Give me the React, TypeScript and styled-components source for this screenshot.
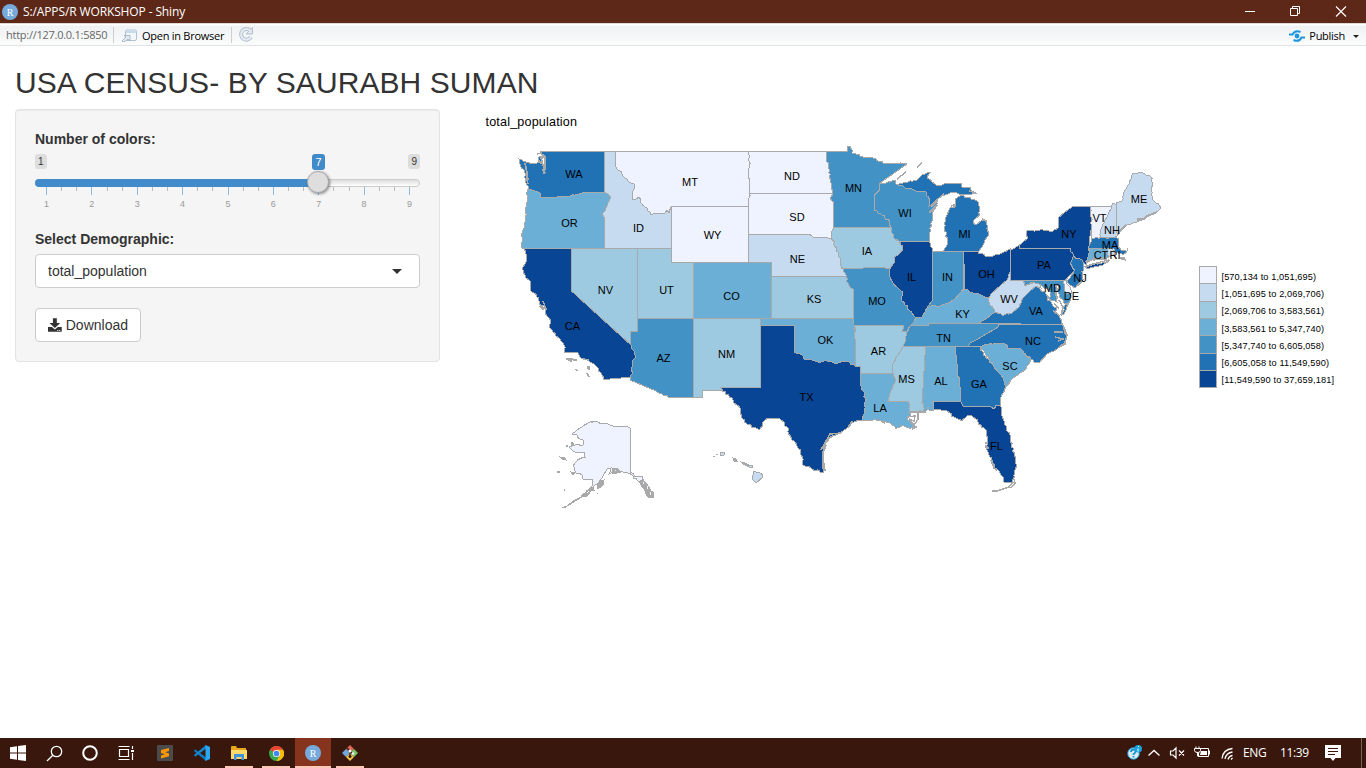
import React from 'react';
import styled, { createGlobalStyle } from 'styled-components';

const GlobalStyle = createGlobalStyle`
  * { box-sizing: border-box; }
  body { margin: 0; background: #fff; color: #333; overflow: hidden;
    font: 14px/20px "Helvetica Neue", "Liberation Sans", Arial, sans-serif; }
`;
const ui = `"Segoe UI", "Open Sans", "Noto Sans", sans-serif`;

const Screen = styled.div`display: flex; flex-direction: column; width: 1366px; height: 768px;`;

const TitleBar = styled.header`
  display: flex; align-items: center; height: 23px; background: #5d2817; padding-left: 2px;
  color: #fff; font: 12px/22px ${ui};
`;
const TitleText = styled.span`flex: 1; margin-left: 5px; letter-spacing: -0.12px;`;
const WindowButtons = styled.div`display: flex; width: 138px; height: 22px; svg { width: 46px; height: 22px; }`;

const ToolBar = styled.nav`
  display: flex; align-items: center; height: 23px; padding: 0 7px 0 6px;
  background: linear-gradient(#fff 0 1px, #eff1f2 2px, #fbfcfc); border-bottom: 1px solid #e1e4e5;
  border-top: 1px solid #e0d8d5; font: 11px/20px ${ui}; color: #000;
`;
const Url = styled.span`width: 107px; color: #666; letter-spacing: -0.26px; white-space: nowrap;`;
const Divider = styled.i`width: 1px; height: 16px; background: #ccd0d3;`;
const OpenButton = styled.span`
  display: flex; align-items: center; gap: 5px; width: 117px; padding: 2px 0 0 7px; white-space: nowrap; letter-spacing: -0.26px;
`;
const Publish = styled.span`
  display: flex; align-items: center; margin-left: auto; padding-top: 3px; gap: 4px; letter-spacing: -0.28px;
`;
const Caret = styled.i<{ $size: number; $color: string; $left?: number }>`
  width: 0; height: 0; border: ${p => p.$size}px solid transparent; border-bottom: 0;
  border-top-color: ${p => p.$color}; margin-left: ${p => p.$left ?? 0}px;
`;

const Page = styled.main`flex: 1; padding: 0 15px; min-height: 0;`;
const Heading = styled.h2`
  margin: 20px 0 10px; font-size: 30px; line-height: 33px; font-weight: 400; white-space: nowrap; letter-spacing: 0.08px;
`;
const Columns = styled.div`display: flex; gap: 30px; align-items: flex-start;`;
const Well = styled.aside`
  width: 425px; height: 253px; padding: 19px; background: #f5f5f5; border: 1px solid #e3e3e3; border-radius: 4px;
  box-shadow: inset 0 1px 1px rgba(0,0,0,.05);
`;
const FieldLabel = styled.label`display: block; font-weight: 700; height: 20px; margin-bottom: 5px;`;
const Slider = styled.div`position: relative; height: 60px; margin-bottom: 15px;`;
const Limits = styled.div`display: flex; justify-content: space-between; height: 25px;`;
const Limit = styled.span`
  height: 15px; padding: 0 3px; border-radius: 3px; background: #dddddd; color: #333;
  font-size: 10px; line-height: 16px;
`;
const ValueBadge = styled.span`
  position: absolute; left: 277px; top: 0; width: 13px; height: 16px; border-radius: 3px; background: #428bca;
  color: #fff; font-size: 11px; line-height: 17px; text-align: center;
`;
const Track = styled.div`
  height: 8px; border: 1px solid #ccc; border-radius: 8px; background: linear-gradient(#dedede, #fff);
`;
const Fill = styled.div`width: 283px; height: 8px; margin: -1px; border-radius: 8px 0 0 8px; background: #428bca;`;
const Handle = styled.span`
  position: absolute; left: 272px; top: 17px; width: 22px; height: 22px; border-radius: 50%;
  background: #dedede; border: 1px solid #ababab; box-shadow: 1px 1px 3px rgba(0,0,0,.45);
`;
const Ticks = styled.div`display: flex; justify-content: space-between; height: 10px; width: 364px; margin-left: 11px;`;
const Tick = styled.i<{ $major: boolean }>`
  width: 1px; height: ${p => (p.$major ? 8 : 4)}px; background: ${p => (p.$major ? '#8fbbdf' : '#bbb')};
`;
const Numbers = styled.div`
  display: flex; justify-content: space-between; width: 368px; margin-left: 9px; color: #999; font-size: 9px; line-height: 14px;
`;
const Select = styled.div`
  display: flex; align-items: center; justify-content: space-between; height: 34px; margin-bottom: 20px;
  padding: 0 17px 0 12px; border: 1px solid #ccc; border-radius: 4px; background: #fff;
`;
const Button = styled.button`
  display: flex; align-items: center; gap: 4px; width: 106px; height: 34px; padding: 0 12px;
  border: 1px solid #ccc; border-radius: 4px; background: #fff; color: #333; font: inherit; white-space: nowrap;
`;
const Plot = styled.svg`
  width: 881px; height: 400px; overflow: visible; flex: none;
  text { font-family: "Liberation Sans", Arial, sans-serif; fill: #000; }
`;

const TaskBar = styled.footer`
  display: flex; height: 30px; background: #3a170c; color: #fff; font: 12px/30px ${ui};
`;
const Task = styled.div<{ $open?: boolean; $active?: boolean }>`
  display: flex; align-items: center; justify-content: center; width: 36px; height: 30px;
  background: ${p => (p.$active ? '#86341d' : 'transparent')};
  background-image: ${p => (p.$open ? 'linear-gradient(#ffc8b6, #ffc8b6)' : 'none')};
  background-size: ${p => (p.$active ? 36 : 28)}px 2px; background-position: center bottom; background-repeat: no-repeat;
`;
const Apps = styled.div`display: flex; gap: 1px; margin-left: 3px;`;
const Tray = styled.div`display: flex; align-items: center; margin-left: auto; height: 30px;`;
const TrayText = styled.span<{ $w: number; $gap: number }>`
  width: ${p => p.$w}px; margin-right: ${p => p.$gap}px; white-space: nowrap; letter-spacing: -0.4px;
`;
const Edge = styled.i`width: 1px; height: 30px; margin: 0 4px 0 20px; background: #7a6259;`;

const C = ['#eff3ff', '#c6dbef', '#9ecae1', '#6baed6', '#4292c6', '#2171b5', '#084594'];

type Shape = [number, string];
const shapes: Shape[] = [
  // west
  [5, '541,151.5 604.5,151.5 604.5,192.5 584,192.5 570,196 560,196 556,197.5 541,198 540,193 534,190.5 528,189.5 526,179 524,170 520,164 519,159 526,162 534,164 540,163 539,157 543,156 542,163 544,174 545,170 545,160 542,155'],
  [3, '528,189.5 534,190.5 540,193 541,198 556,197.5 560,196 570,196 584,192.5 604.5,192.5 608,194 610.5,197 607,206 602.5,215 605,218 604.5,222 604.5,248.5 522.5,248.5 521.5,236 524,226 526,210 527,195'],
  [1, '604.5,151.5 615.5,151.5 615.5,166.5 622,174 627,179 631,183 634,184 634,189 632,193 632,199 636,199 639,197 641,203 645,207 648,211 651,215 655,213 665,213 667,210 669,213 671.5,206.5 671.5,248.5 604.5,248.5 604.5,222 605,218 602.5,215 607,206 610.5,197 608,194 604.5,192.5'],
  [0, '615.5,151.5 748.5,151.5 749.5,162 748.5,172 749.5,180 749.5,206.5 671.5,206.5 669,213 667,210 665,213 655,213 651,215 648,211 645,207 641,203 639,197 636,199 632,199 632,193 634,189 634,184 631,183 627,179 622,174 615.5,166.5'],
  [0, '671.5,206.5 748.5,206.5 748.5,262.5 671.5,262.5'],
  [2, '571.5,248.5 637.5,248.5 637.5,331 630,331 630,341 631,345 571.5,291'],
  [2, '637.5,248.5 671.5,248.5 671.5,262.5 693.5,262.5 693.5,318.5 637.5,318.5'],
  [3, '693.5,262.5 771.5,262.5 771.5,318.5 693.5,318.5'],
  [6, '524,248.5 571.5,248.5 571.5,291 631,345 633,350 636,356 632,362 631,370 633,373 632,377 604,379.5 602,375 598,368 592,363 588,359 583,359 578,353 565,352.5 564,345 561,341 556,336 552,330 549,326 551,321 547,316 545,313 546,307 541,305 537,297 530.5,290 530,281 525,275 522,269 526,262 526,254'],
  [4, '637.5,318.5 693.5,318.5 693.5,397.5 671,397.5 656,391 630,380 630,377 633,373 631,370 632,362 636,356 633,350 631,345 630,341 630,331 637.5,331'],
  [2, '693.5,318.5 760.5,318.5 760.5,387.5 721,387.5 721,390.5 702.5,390.5 702.5,397.5 693.5,397.5'],
  // plains
  [0, '748.5,151.5 826,151.5 826,157 828.5,168 830,182 832.5,193.5 749.5,193.5 749.5,180 748.5,172 749.5,162'],
  [0, '749.5,193.5 832.5,193.5 830.5,198 833.5,202 833.5,227.5 831.5,232 832.5,240 825,237 813,237 810,234.5 748.5,234.5 748.5,206.5'],
  [1, '748.5,234.5 810,234.5 813,237 825,237 832.5,240 836.5,248 840,258 841,266 846.5,276.5 771.5,276.5 771.5,262.5 748.5,262.5'],
  [2, '771.5,276.5 846.5,276.5 848,283 851,288 853.5,289.5 853.5,318.5 771.5,318.5'],
  [3, '760.5,318.5 853.5,318.5 855,330 855.5,366 847,361 834,363 827,361 818,362 811,359 804,359 802,355 794.5,352.5 794.5,325.5 760.5,325.5'],
  [6, '760.5,325.5 794.5,325.5 794.5,352.5 802,355 804,359 811,359 818,362 827,361 834,363 847,361 855.5,366 860.5,366 860.5,385 865.5,398 864.5,410 862.5,420 852,422 850,426 840,433 830,437 826,443 822,454 823.5,465 823.5,473 812,469 803,465 801,450 792,440 787,427 779,418 767,418.5 763,422 762.5,426 759,430 747,424 742,418 740,408 733,400 720.5,387.5 760.5,387.5'],
  [4, '826,151.5 848,151.5 847.5,146 850.5,146 852,153 863,157 873,158 883,163 895,163 907,164 897,171 880,183 879.5,190 874.5,195 874.5,210 882,215 890,222 891.5,227.5 833.5,227.5 833.5,202 830.5,198 832.5,193.5 830,182 828.5,168 826,157'],
  [2, '833.5,227.5 891.5,227.5 893,237 899,241 903,249 898,255 894,257 894,263 889.5,269 885,267.5 843,268.5 841,266 840,258 836.5,248 832.5,240 831.5,232'],
  [4, '843,268.5 885,267.5 889.5,269 889,275 897,287 903,292 902,301 911.5,312 915,317 914,322 909,328 907,332 902,331.5 903.5,325.5 854.5,325.5 853.5,318.5 853.5,289.5 851,288 848,283 846.5,276.5'],
  [2, '854.5,325.5 903.5,325.5 902,331.5 907,332 905,342 903.5,346.5 897,356 892.5,365 893,373.5 861,373.5 860.5,366 855.5,366 855.5,340'],
  [3, '861,373.5 893,373.5 895,382 890,393 888,401.5 908,401.5 910,411 911,416 907,418 915,425 910,429 903,425 900,427 896,428.5 890,423 884,421 873,420 862.5,420 864.5,410 865.5,398 860.5,385'],
  [2, '903.5,346.5 925.5,346.5 922.5,397 923.5,411.5 918,412 910,411 908,401.5 888,401.5 890,393 895,382 893,373.5 892.5,365 897,356'],
  [3, '925.5,346.5 955,346.5 958,373 960.5,388 960.5,401.5 932.5,401.5 933.5,410 929,410 928,407 926.5,411 923.5,411.5 922.5,397'],
  // great lakes
  [4, '879.5,183 886,183 895,180 896,184 905,188 920,191 927,193 930,200 929,206 931,205 938,199 936,206 932,214 932,221 929.5,233 929.5,241.5 900,241.5 893,237 891.5,227.5 890,222 882,215 874.5,210 874.5,195 879.5,190'],
  [5, '896,184 903,183 917,180 923,174 930,172.5 927,178 932,182 937,186 950,183 961,183 962,187 970,187 972,192 977,193 968,195 953,192 945,195 940,197 933,203 930,206 927,193 920,191 905,188'],
  [5, '955,199 960,196 968,197 978,202 979.5,215 973,221 976,225 982,220 986.5,221 989,235 985,240 983,245 978,252 963,251.5 943,251.5 947,245 947.5,238 944,228 946,217 950,208 955,207'],
  [4, '932.5,251.5 963.5,251.5 963.5,289 960,293 955,299 948,303 940,306 933,305 927,308 932,301 932.5,293'],
  [6, '900,241.5 929.5,241.5 932.5,251.5 932.5,293 932,301 927,308 922,317 915,317 911.5,312 902,301 903,292 897,287 889,275 889.5,269 894,263 894,257 898,255 903,249'],
  [6, '963.5,251.5 978,252 988,257 1000,254 1010.5,249 1010.5,270 1007,280 1000,286 992,293 989,298 983,296 973,293 965,289'],
  [3, '914,322 915,317 922,317 927,308 933,305 940,306 948,303 955,299 960,293 965,289 973,293 983,296 989,298 990,305 995,312 987,318 978,323.5 929,323.5 928,325.5 910.5,325.5'],
  [4, '910.5,325.5 928,325.5 929,323.5 998.5,323.5 998,327 983,336 970,343 968,346.5 903.5,346.5 905,342 907,332'],
  // south east
  [5, '998.5,324.5 1062.5,324.5 1064,330 1067,337 1064,343 1055,350.5 1047,354 1040,362 1034,362 1020,348.5 1008,348.5 1005,344 995,343.5 985,344.5 980.5,346.5 968,346.5 970,343 983,336 998,327'],
  [3, '980.5,346.5 985,344.5 995,343.5 1005,344 1008,348.5 1020,348.5 1031,360 1025,370 1013,378 1006,387 1004,381 993,365'],
  [5, '955,346.5 980.5,346.5 980,350 993,365 1004,381 1006,387 1001,397 1000,405 996,405 994,409 991,407 963,406 960.5,401.5 960.5,388 958,373'],
  [6, '932.5,401.5 960.5,401.5 963,406 991,407 994,409 996,405 1000,405 1001,413 1005,425 1010,435 1010.5,442 1016,460 1015,473 1012,482 1005,483 1001,475 995,468 992,460 986.5,447 988,440 986,430 978,422 973,417 968,415 962,420.5 954,417 947,411 934,410'],
  // north east
  [5, '978,323.5 987,318 995,312 1002,315 1012,313 1019,307 1023,298 1030,290 1036,284 1040,289 1046,294 1047,300 1057,308 1055,312 1060,318 1062.5,324.5'],
  [1, '1010.5,270 1010.5,280.5 1022.5,280.5 1024,286 1033,283 1040,284 1041,288 1036,286 1030,291 1023,298 1019,307 1012,313 1002,315 995,312 990,305 989,298 992,293 1000,286 1007,280'],
  [4, '1022.5,280.5 1063.5,280.5 1065,293.5 1071,294 1069,303 1064,303 1059,297 1058,284 1056,292 1058,303 1049,300 1050,292 1041,285 1033,282 1024,286'],
  [5, '1065,305 1068,303 1064,314 1062,315'],
  [0, '1063.5,280.5 1066,280 1067,284 1071,290 1071.5,294 1065,293.5'],
  [6, '1010.5,250.5 1019.5,245 1019.5,248.5 1070,248.5 1073.5,256 1070.5,263.5 1075,270 1068,277 1065,280.5 1010.5,280.5'],
  [6, '1019.5,248.5 1019.5,245 1028,238 1027,231 1040,230 1052,231.5 1058,228 1058,218 1065,212 1073,206.5 1090.5,206.5 1091.5,227 1089.5,240 1088.5,257 1086,265 1083,262 1073.5,256 1070,248.5'],
  [6, '1085,267 1100,263 1110,260.5 1102,265.5 1087,268.5'],
  [5, '1073.5,256 1083,262 1083.5,270 1082,280 1075,288 1070,285 1067,282 1075,270 1070.5,263.5'],
  [0, '1090.5,206.5 1111.5,206.5 1108,215 1105,220 1102,227 1099.5,238.5 1091.5,238.5 1091.5,227'],
  [1, '1111.5,206.5 1113,203 1116.5,205 1117,227 1118,235 1115,237.5 1099.5,238.5 1102,227 1105,220 1108,215'],
  [1, '1116.5,203 1122,201 1125,190 1129,184 1132,173 1138,173 1145,174 1151,177 1152.5,197 1156,203 1161,208 1157,212 1147,217 1137,222 1127,225 1120,232 1118,235 1117,227'],
  [5, '1091.5,238.5 1115,237.5 1119,240 1118,246 1121,250 1127,252 1123,255 1118,253 1112,248.5 1089,248.5'],
  [3, '1089,248.5 1107.5,248.5 1108.5,257 1097,259 1087,262'],
  [1, '1107.5,248.5 1112,248.5 1115,254 1108.5,257'],
  // Alaska
  [0, '595,421 603,423 617,426 628,427 630.5,428.5 630.5,472.5 637,477 642,476 646,483 650,489 654,495 650,498 645,491 638,481 630.5,474 617,471 609,474 611,468 607,469 603,476 598,483 590,489 583,495 592,486 593,480 583,479 582,475 576,473 573,466 578,459 585,457 584,452 575,452 569,447 578,444 583,445 584,441 580,439 577,435 572,434 580,428 588,423'],
  // Hawaii
  [1, '754,471.5 760,473 763,477 756,483 753,480'],
  [1, '720,453 724,452.5 724,455 721,456'],
  [1, '748,465 753,465 752,468 749,467'],
];

// Breaks sloping borders into small steps; both neighbours get the same points.
const rough = (src: string): string => {
  const pts = src.split(' ').map(s => s.split(',').map(Number));
  const out: string[] = [];
  pts.forEach((a, i) => {
    const b = pts[(i + 1) % pts.length];
    out.push(`${a[0]},${a[1]}`);
    const dx = b[0] - a[0], dy = b[1] - a[1], len = Math.hypot(dx, dy);
    if (Math.abs(dx) < 0.6 || Math.abs(dy) < 0.6 || len > 26 || len < 4) return;
    const n = Math.floor(len / 2.2);
    for (let k = 1; k < n; k++) {
      const x = a[0] + (dx * k) / n, y = a[1] + (dy * k) / n;
      const r = Math.sin(Math.round(x * 8) * 12.99 + Math.round(y * 8) * 78.23) * 0.85;
      out.push(`${(x + r).toFixed(1)},${(y - r * 0.8).toFixed(1)}`);
    }
  });
  return out.join(' ');
};

const labels: [string, number, number][] = [
  ['WA', 574, 174], ['OR', 569.5, 223], ['ID', 638.5, 228], ['MT', 690, 182], ['WY', 712.5, 235], ['NV', 605.5, 290],
  ['UT', 666.5, 290], ['CO', 731.5, 296], ['CA', 572.5, 326], ['AZ', 663.5, 358], ['NM', 726.5, 354], ['ND', 792, 176],
  ['SD', 797, 217], ['NE', 797.5, 259], ['KS', 814, 299], ['OK', 825.5, 340], ['TX', 806.5, 397], ['MN', 853.5, 188],
  ['WI', 905, 213], ['IA', 867, 251], ['MO', 877, 301], ['AR', 878.5, 351], ['LA', 880, 408], ['MS', 906.5, 379],
  ['AL', 941, 381], ['GA', 979, 384], ['FL', 996.5, 446], ['IL', 911.5, 277], ['IN', 947.5, 277], ['MI', 964.5, 234],
  ['OH', 986.5, 274], ['KY', 962.5, 314], ['TN', 943.5, 338], ['SC', 1010, 366], ['NC', 1033, 341], ['VA', 1036, 311],
  ['WV', 1009, 299], ['PA', 1044, 265], ['NY', 1069, 234], ['NJ', 1080, 278], ['MD', 1052.5, 288], ['DE', 1071.5, 296],
  ['CT', 1101, 255], ['RI', 1115, 255], ['MA', 1110, 245], ['NH', 1112, 230], ['VT', 1099.5, 218], ['ME', 1139, 199],
];
const ranges: [string, number][] = [['[570,134 to 1,051,695)', 94.5], ['[1,051,695 to 2,069,706)', 102.5],
  ['[2,069,706 to 3,583,561)', 102.5], ['[3,583,561 to 5,347,740)', 102.5], ['[5,347,740 to 6,605,058)', 102.5],
  ['[6,605,058 to 11,549,590)', 107.5], ['[11,549,590 to 37,659,181]', 112.5]];

const UsMap = () => (
  <Plot viewBox="470 109 881 400">
    <text x="485.5" y="126" fontSize="12.6" textLength="91.5">total_population</text>
    <g stroke="#a9a9a9" strokeWidth="1" shapeRendering="crispEdges">
      {shapes.map(([c, p], i) => <polygon key={i} points={rough(p)} fill={C[c]} />)}
      {/* inlets, bays and islands */}
      <g fill="none">
        <path d="M537 154l4-1 2 3-3 3M541 157l2 8 2 8M543 154l2 3v11M539 161l3 3M525 163l2 10 1 7M526 175l2 9" strokeWidth="1.6" />
        <path d="M566 359h6l-1 2-3-1M573 360h4M576 369l1 2M587 367h3M588 368l2 2M587 373l2 4M543 301l3 8-4-2M540 306l4 4M583 359l6 1" strokeWidth="1.5" />
        <path d="M852 421l-3 5M841 433l-11 1-5 9-4 7M826 445l-3 8v16M824 463l1 8M833 436l-5 3" strokeWidth="1.6" />
        <path d="M907 417l8-1-1 5-5-2M910 422l6 5-4 2M918 413v6l-3 5M917 412h9M881 421l4 2M921 411l-12 2" strokeWidth="1.5" />
        <path d="M992 491l5 0 6-2 6-2 4-5M1014 479l1 4-4 5M986 445l2 3-3-1M991 460l3 8 3 2M985 443h3" strokeWidth="1.5" />
        <path d="M917 167l5-4M906 172l-9 7M929 213l8-8M931 207l6-6M951 206l3-1v3M982 219l4 2M940 197l4-3M969 191l7 2" strokeWidth="1.5" />
        <path d="M1054 332h9M1055 337l8 2-5 2M1063 325l4 10-2 9-6 3M1054 303l5 6M1053 311l6 4M1047 295l4 6M1056 284l1 15M1061 315l2-8M1059 300l4 7" strokeWidth="1.4" />
        <path d="M1084 267l8-3 17-4M1120 258h5M1127 248l1 3M1121 259l5 1M1085 262l8-3h14M1082 271l1 9-5 6M1113 254l4 5" strokeWidth="1.2" />
        <path d="M1119 232l7-7M1137 219h8M1137 221l9-3M1145 217l12-5M1121 230l5-5" strokeWidth="2" />
      </g>
      <g fill="#a9a9a9">
        <path d="M560 457l5 1 1 2-4-1zM557 471h2v1h-2zM564 489l1 2zM571 472l4 1-2 2zM566 445h1v1h-1zM571 442l3 2-3 1zM600 481l4-1-1 5-5 4-1-3zM612 468l6 1 3 3-8 2zM641 480l6 4 4 7 3 2-1 5-5-1-4-8-4-5zM597 493h1z" />
        <path d="M562 508l4-1 6-5 5-3 4-2 3-4 4 0 3-2-4 5-5 1-7 4-6 4zM588 490l5-3 1 3z" />
        <path d="M713 457l2-1zM716 455l2-1zM733 458l3 1 1 2-3 0zM741 462l4 1 4 2-2 1-4-2zM745 464l3 3z" />
      </g>
      <path d="M643 482l1 2M647 486l1 3M650 492v3M615 470h1M589 488l2-2" stroke="#eff3ff" />
    </g>
    {labels.map(([t, x, y]) => <text key={t} x={x} y={y + 4} fontSize="11" textAnchor="middle">{t}</text>)}
    {ranges.map(([r, w], i) => (
      <g key={r}>
        <rect x="1199.5" y={266.5 + i * 17.3} width="17" height="17.3" fill={C[i]} stroke="#a9a9a9" shapeRendering="crispEdges" />
        <text x="1221.5" y={280 + i * 17.2} fontSize="9.2" textLength={w}>{r}</text>
      </g>
    ))}
  </Plot>
);

const RLogo = ({ size }: { size: number }) => (
  <svg width={size} height={size} viewBox="0 0 16 16">
    <circle cx="8" cy="8" r="8" fill="#75aadb" />
    <text x="8" y="11.5" fontSize="10" fontFamily="Liberation Serif, serif" fill="#fff" textAnchor="middle">R</text>
  </svg>
);

export default function App() {
  return (
    <Screen>
      <GlobalStyle />
      <TitleBar>
        <RLogo size={16} />
        <TitleText>S:/APPS/R WORKSHOP - Shiny</TitleText>
        <WindowButtons>
          <svg viewBox="0 0 46 22"><path d="M17 10.500h10" stroke="#fff" /></svg>
          <svg viewBox="0 0 46 22"><path d="M16.500 7.500h7v7h-7zM18.500 7.500v-2h7v7h-2" fill="none" stroke="#fff" /></svg>
          <svg viewBox="0 0 46 22"><path d="M16 5.500l10 10M26 5.500l-10 10" stroke="#fff" strokeWidth="1.1" /></svg>
        </WindowButtons>
      </TitleBar>
      <ToolBar>
        <Url>http://127.0.0.1:5850</Url>
        <Divider />
        <OpenButton>
          <svg width="16" height="13" viewBox="0 0 16 13">
            <rect x="4.500" y="1" width="11" height="10.500" rx="1.500" fill="#f4f7fa" stroke="#b3c2d1" />
            <path d="M5 2h10v2H5z" fill="#c5dcee" />
            <path d="M1 12l4-4-2-1.500h6v5.500l-2-2-4 3z" fill="#e4ebf2" stroke="#9aabbd" strokeWidth=".8" />
          </svg>
          Open in Browser
        </OpenButton>
        <Divider />
        <svg width="28" height="18" viewBox="0 0 28 18">
          <path d="M18.500 5A5.300 5.300 0 1 0 19 11" fill="none" stroke="#b5c0ce" strokeWidth="4" />
          <path d="M20.500 1.500V8H14z" fill="#dfe6ee" stroke="#b5c0ce" />
          <path d="M18.500 5A5.300 5.300 0 1 0 19 11" fill="none" stroke="#e6ecf3" strokeWidth="2" />
        </svg>
        <Publish>
          <svg width="16" height="12" viewBox="0 0 16 12">
            <circle cx="8" cy="6" r="2.400" fill="#1c97e0" />
            <path d="M0 4.500h3.500C5 1.500 8 .5 11.500 2M16 7.500h-3.500C11 10.500 8 11.500 4.500 10" fill="none" stroke="#1c97e0" strokeWidth="2" />
          </svg>
          <span>Publish</span>
          <Caret $size={3} $color="#222" $left={4} />
        </Publish>
      </ToolBar>
      <Page>
        <Heading>USA CENSUS- BY SAURABH SUMAN</Heading>
        <Columns>
          <Well>
            <FieldLabel>Number of colors:</FieldLabel>
            <Slider>
              <Limits><Limit>1</Limit><Limit>9</Limit></Limits>
              <Track><Fill /></Track>
              <Ticks>{Array.from({ length: 25 }, (_, i) => <Tick key={i} $major={i % 3 === 0} />)}</Ticks>
              <Numbers>{[1, 2, 3, 4, 5, 6, 7, 8, 9].map(n => <span key={n}>{n}</span>)}</Numbers>
              <ValueBadge>7</ValueBadge>
              <Handle />
            </Slider>
            <FieldLabel>Select Demographic:</FieldLabel>
            <Select>total_population<Caret $size={5} $color="#333" /></Select>
            <Button>
              <svg width="14" height="14" viewBox="0 0 14 14" fill="#333">
                <path d="M5 0h4v5h3.500L7 10 1.500 5H5z" />
                <path fillRule="evenodd" d="M0 9h4l3 2.600L10 9h4v5H0zM9.500 12v1h1v-1zM11.500 12v1h1v-1z" />
              </svg>
              Download
            </Button>
          </Well>
          <UsMap />
        </Columns>
      </Page>
      <TaskBar>
        <Task><svg width="16" height="16" viewBox="0 0 16 16" fill="#fff"><path d="M0 2.300L7 1.300v6.200H0zM8 1.100L16 0v7.500H8zM0 8.500h7v6.200l-7-1zM8 8.500h8V16l-8-1.100z" /></svg></Task>
        <Task><svg width="17" height="17" viewBox="0 0 17 17" fill="none" stroke="#fff" strokeWidth="1.300"><circle cx="10.500" cy="6.500" r="5.200" /><path d="M6.800 10.200L1 16" /></svg></Task>
        <Task><svg width="16" height="16" viewBox="0 0 16 16"><circle cx="8" cy="8" r="6.800" fill="none" stroke="#fff" strokeWidth="2" /></svg></Task>
        <Task><svg width="17" height="16" viewBox="0 0 17 16" fill="none" stroke="#fff" strokeWidth="1.200"><path d="M1.500 4.500h9v7h-9zM.5 1.500h11M.5 14.500h11M14.500 1v3M14.500 8v7" /><path d="M13 5h3v2h-3z" fill="#fff" stroke="none" /></svg></Task>
        <Apps>
          <Task><svg width="16" height="16" viewBox="0 0 16 16"><rect width="16" height="16" rx="1" fill="#4b4b4b" /><path d="M12 3v3L8 7.200l4 1.300v2.800L4 13.500v-3l4-1.200-4-1.300V5z" fill="#ff9800" /></svg></Task>
          <Task><svg width="16" height="16" viewBox="0 0 16 16"><path d="M0 5.500l1.500-1L12 12.500V16L0 6z" fill="#0a7cc4" /><path d="M0 10.500l1.500 1L12 3.500V0L0 10z" fill="#1386d1" /><path d="M11.500 0L16 2v12l-4.500 2z" fill="#2aa7f2" /></svg></Task>
          <Task $open><svg width="16" height="14" viewBox="0 0 16 14"><path d="M0 1q0-1 1-1h4l1 2h9v11H0z" fill="#e6a91e" /><path d="M0 4h16v9H0z" fill="#ffd969" /><path d="M3 14V8h10v6h-2.500v-3h-5v3z" fill="#3f94dc" /></svg></Task>
          <Task $open><svg width="15" height="15" viewBox="0 0 16 16"><circle cx="8" cy="8" r="8" fill="#38a852" /><path d="M1 4a8 8 0 0 1 14 0L8 8.500z" fill="#ea4335" /><path d="M8 16a8 8 0 0 0 7-12H8l3.500 6z" fill="#fbbc05" /><circle cx="8" cy="8" r="3.800" fill="#fff" /><circle cx="8" cy="8" r="3" fill="#4285f4" /></svg></Task>
          <Task $open $active><RLogo size={16} /></Task>
          <Task $open><svg width="16" height="16" viewBox="0 0 16 16"><path d="M8 0l4 4-4 4-4-4z" fill="#de6658" /><path d="M12 4l4 4-4 4-4-4z" fill="#7bc46a" /><path d="M4 4l4 4-4 4-4-4z" fill="#6fa6dc" /><path d="M8 8l4 4-4 4-4-4z" fill="#f2c84b" /><path d="M5 3l6 6M8 6v6" stroke="#301712" strokeWidth="1.300" /><circle cx="8" cy="6" r="1.500" fill="#fff" /><circle cx="8" cy="11.500" r="1.500" fill="#301712" /><circle cx="11" cy="8.500" r="1.300" fill="#fff" /></svg></Task>
        </Apps>
        <Tray>
          <svg width="117" height="20" viewBox="1126 743 117 20" fill="none" stroke="#fff">
            <circle cx="1133.500" cy="753.500" r="5.800" fill="#d9edf6" stroke="#1796cf" strokeWidth="1" />
            <path d="M1131 752q0-2.500 2.500-2.500t2 2-2 2.500v1M1133.500 756v1.500" stroke="#1796cf" strokeWidth="1.800" />
            <circle cx="1138.200" cy="748.800" r="3.800" fill="#1ba1dc" stroke="none" /><path d="M1138.500 746v1M1138 748.500v3" />
            <path d="M1148.500 755.500l5.500-5 5.500 5" strokeWidth="1.300" />
            <path d="M1170.500 751v4h2.500l3 3v-10l-3 3zM1179 750.500l5 5M1184 750.500l-5 5" strokeWidth="1.200" />
            <path d="M1198.500 748.500h10v8h-10zM1209.500 750.500v4M1196 746.500v3M1199 746.500v3" /><path d="M1194.500 748.500h6v2q0 2-3 2t-3-2z" fill="#3a170c" /><path d="M1201 751h6v4h-7z" fill="#fff" stroke="none" /><path d="M1197.500 752v4h2" />
            <path d="M1222 758.500q1-9 10.500-10M1225 759q1-6 7.500-7M1228 759.500q1-3.500 4.500-4M1231 759.500l1.500-1.500" strokeWidth="1.300" />
          </svg>
          <TrayText $w={24} $gap={13}>ENG</TrayText>
          <TrayText $w={28} $gap={17}>11:39</TrayText>
          <svg width="16" height="16" viewBox="0 0 16 16"><path d="M0 0h16v13h-5.500L8 16l-2.500-3H0z" fill="#fff" /><path d="M3 3.500h10M3 6.500h10M3 9.500h7" stroke="#3a170c" /></svg>
          <Edge />
        </Tray>
      </TaskBar>
    </Screen>
  );
}
